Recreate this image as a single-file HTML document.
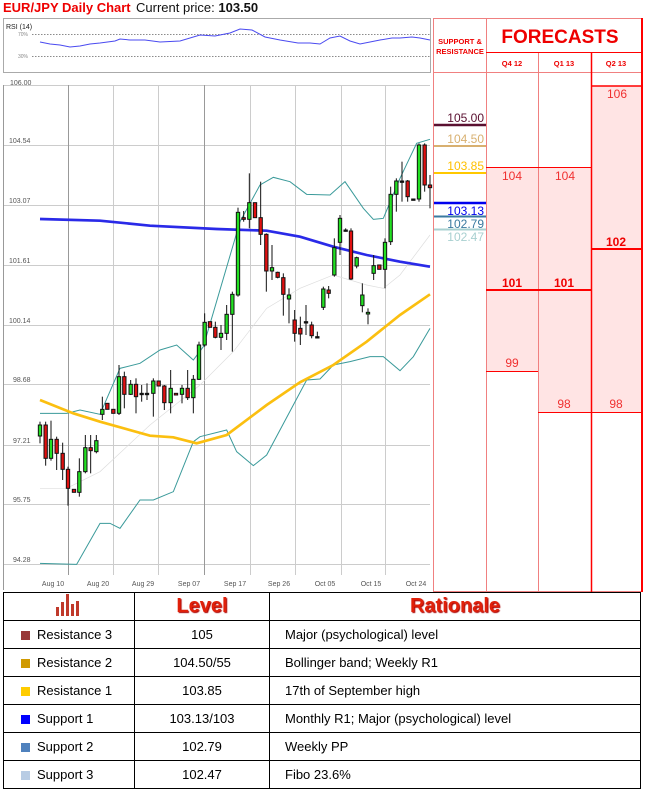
<!DOCTYPE html>
<html><head><meta charset="utf-8"><style>
body{margin:0;width:647px;height:790px;background:#fff;position:relative;overflow:hidden;font-family:"Liberation Sans",sans-serif}
.a{position:absolute}
table{border-collapse:collapse;position:absolute;left:3px;top:592px;width:638px;font-size:13px}
td{border:1px solid #000;height:27px;padding:0}
.c{text-align:center}
.sq{display:inline-block;width:9px;height:9px;margin:0 7px 0 17px;vertical-align:-1px}
.h{color:#e0200a;font-weight:bold;font-size:20px;text-align:center;text-shadow:1px 1px 1px #a00}
</style></head><body>
<div class="a" style="left:3px;top:0;font-size:13px;color:#e00;font-weight:bold">EUR/JPY Daily Chart</div>
<div class="a" style="left:136px;top:0;font-size:13px;color:#111">Current price: <b>103.50</b></div>

<svg class="a" style="left:0;top:0" width="647" height="790">
<!-- RSI box -->
<rect x="3.5" y="18.5" width="427" height="54" fill="#fff" stroke="#aaa"/>
<text x="6" y="29" font-size="7" font-family="Liberation Sans" fill="#222">RSI (14)</text>
<text x="18" y="36" font-size="5" fill="#888" font-family="Liberation Sans">70%</text>
<text x="18" y="58" font-size="5" fill="#888" font-family="Liberation Sans">30%</text>
<line x1="32" y1="34.5" x2="430" y2="34.5" stroke="#666" stroke-dasharray="1.5,1.5" stroke-width="0.8"/>
<line x1="32" y1="56.5" x2="430" y2="56.5" stroke="#666" stroke-dasharray="1.5,1.5" stroke-width="0.8"/>
<polyline fill="none" stroke="#4a4af0" stroke-width="1" points="40,42 50,44 60,45 70,47 80,46 90,44 100,43 115,41 120,39 130,40 145,40 160,42 180,41 200,35 215,36 230,33 240,29 252,30 265,37 280,40 298,43 310,43 320,44 330,38 340,36 350,41 360,44 370,42 380,40 392,38 400,38 412,37 420,38 430,40"/>
<!-- chart frame -->
<text x="10" y="85" font-size="7" fill="#555" font-family="Liberation Sans">106.00</text>
<g stroke="#ccc" stroke-width="1">
<line x1="3" y1="85.5" x2="430" y2="85.5"/><line x1="3" y1="145.5" x2="430" y2="145.5"/><line x1="3" y1="205.5" x2="430" y2="205.5"/><line x1="3" y1="265.5" x2="430" y2="265.5"/><line x1="3" y1="325.5" x2="430" y2="325.5"/><line x1="3" y1="384.5" x2="430" y2="384.5"/><line x1="3" y1="445.5" x2="430" y2="445.5"/><line x1="3" y1="504.5" x2="430" y2="504.5"/><line x1="3" y1="564.5" x2="430" y2="564.5"/>
<line x1="113.5" y1="85" x2="113.5" y2="575"/><line x1="158.5" y1="85" x2="158.5" y2="575"/><line x1="250.5" y1="85" x2="250.5" y2="575"/><line x1="295.5" y1="85" x2="295.5" y2="575"/><line x1="341.5" y1="85" x2="341.5" y2="575"/><line x1="385.5" y1="85" x2="385.5" y2="575"/>
</g>
<line x1="68.5" y1="85" x2="68.5" y2="575" stroke="#999"/><line x1="204.5" y1="85" x2="204.5" y2="575" stroke="#999"/>
<line x1="3.5" y1="85" x2="3.5" y2="590" stroke="#999"/>
<g font-size="7" fill="#555" font-family="Liberation Sans">
<text x="9" y="143">104.54</text><text x="9" y="203">103.07</text><text x="9" y="263">101.61</text><text x="9" y="323">100.14</text><text x="13" y="382">98.68</text><text x="13" y="443">97.21</text><text x="13" y="502">95.75</text><text x="13" y="562">94.28</text>
</g>
<g font-size="7" fill="#555" font-family="Liberation Sans" text-anchor="middle">
<text x="53" y="586">Aug 10</text><text x="98" y="586">Aug 20</text><text x="143" y="586">Aug 29</text><text x="189" y="586">Sep 07</text><text x="235" y="586">Sep 17</text><text x="279" y="586">Sep 26</text><text x="325" y="586">Oct 05</text><text x="371" y="586">Oct 15</text><text x="416" y="586">Oct 24</text>
</g>
<g transform="translate(0,75) scale(0.33333)" fill="none">
<polyline stroke="#ddd" stroke-width="2" points="120,1240 200,1240 300,1190 450,1050 600,930 700,830 800,700 900,640 1000,600 1100,630 1150,640 1200,600 1290,480"/>
<polyline stroke="#3a9a9a" stroke-width="3" points="120,1015 200,1015 240,1005 300,1018 360,880 420,865 480,825 530,810 580,855 610,815 720,440 780,330 820,307 870,320 920,358 990,360 1035,320 1090,400 1120,433 1150,430 1200,310 1250,205 1290,193"/>
<polyline stroke="#3a9a9a" stroke-width="3" points="120,1465 230,1468 300,1345 330,1345 360,1360 420,1275 460,1275 520,1250 580,1100 600,1085 680,1065 710,1130 760,1172 800,1140 880,990 920,915 960,912 1000,870 1050,860 1110,845 1150,845 1200,887 1240,845 1290,760"/>
<polyline stroke="#2a2ae8" stroke-width="8" points="120,432 300,437 450,452 650,462 800,467 900,485 1000,515 1100,540 1200,560 1290,575"/>
<polyline stroke="#fbbf10" stroke-width="8" points="120,975 220,1015 300,1040 450,1082 520,1087 590,1105 680,1080 800,990 900,922 1000,870 1100,800 1200,720 1290,658"/>
<g stroke="#111" stroke-width="3" id="cd"></g>
</g>
<!-- levels -->
<line x1="433" y1="125" x2="486" y2="125" stroke="#5a1030" stroke-width="2.5"/>
<line x1="433" y1="146" x2="486" y2="146" stroke="#d8b070" stroke-width="2"/>
<line x1="433" y1="173" x2="486" y2="173" stroke="#ffc800" stroke-width="2"/>
<line x1="433" y1="203" x2="486" y2="203" stroke="#0000ee" stroke-width="2.5"/>
<line x1="433" y1="216.5" x2="486" y2="216.5" stroke="#3a7aa0" stroke-width="2"/>
<line x1="433" y1="229.5" x2="486" y2="229.5" stroke="#a8d0d0" stroke-width="2"/>
<g font-size="12" font-family="Liberation Sans" text-anchor="end">
<text x="484" y="122" fill="#5a1030">105.00</text>
<text x="484" y="143" fill="#d8b070">104.50</text>
<text x="484" y="170" fill="#ffc000">103.85</text>
<text x="484" y="215" fill="#0000ee">103.13</text>
<text x="484" y="228" fill="#3a7aa0">102.79</text>
<text x="484" y="241" fill="#a8d0d0">102.47</text>
</g>
<!-- forecast table -->
<rect x="486" y="167" width="52" height="204" fill="#ffe4e4"/>
<rect x="538" y="167" width="53" height="245" fill="#ffe4e4"/>
<rect x="591" y="86" width="52" height="326" fill="#ffe4e4"/>
<g stroke="#f08080" stroke-width="1">
<rect x="433.5" y="18.5" width="209" height="573" fill="none"/>
<line x1="433" y1="72.5" x2="643" y2="72.5"/>
<line x1="486.5" y1="18" x2="486.5" y2="592"/>
<line x1="538.5" y1="52" x2="538.5" y2="592"/>
</g>
<g stroke="#f00">
<line x1="486" y1="52.5" x2="643" y2="52.5" stroke-width="1"/>
<line x1="591.5" y1="52" x2="591.5" y2="592" stroke-width="1.5"/>
<line x1="642" y1="18" x2="642" y2="592" stroke-width="2"/>
<line x1="591" y1="86" x2="643" y2="86" stroke-width="1.5"/>
<line x1="486" y1="167.5" x2="591" y2="167.5" stroke-width="1"/>
<line x1="486" y1="290" x2="591" y2="290" stroke-width="2"/>
<line x1="591" y1="249" x2="643" y2="249" stroke-width="2"/>
<line x1="486" y1="371.5" x2="538" y2="371.5" stroke-width="1"/>
<line x1="538" y1="412.5" x2="643" y2="412.5" stroke-width="1"/>
</g>
<g fill="#e00" font-family="Liberation Sans" text-anchor="middle">
<text x="560" y="43" font-size="19" font-weight="bold">FORECASTS</text>
<text x="460" y="44" font-size="7.5" font-weight="bold">SUPPORT &amp;</text>
<text x="460" y="54" font-size="7.5" font-weight="bold">RESISTANCE</text>
<text x="512" y="66" font-size="7.5" font-weight="bold">Q4 12</text>
<text x="564" y="66" font-size="7.5" font-weight="bold">Q1 13</text>
<text x="616" y="66" font-size="7.5" font-weight="bold">Q2 13</text>
<g font-size="12" fill="#f03030">
<text x="617" y="98">106</text>
<text x="512" y="180">104</text><text x="565" y="180">104</text>
<text x="512" y="367">99</text><text x="564" y="408">98</text><text x="616" y="408">98</text>
</g>
<g font-size="12" font-weight="bold" fill="#e00">
<text x="512" y="287">101</text><text x="564" y="287">101</text><text x="616" y="246">102</text>
</g>
</g>
</svg>

<table>
<tr><td style="width:130px" class="c"><svg width="30" height="22" viewBox="0 0 30 22"><g fill="#c0392b"><rect x="2" y="13" width="3" height="9"/><rect x="7" y="8" width="3" height="14"/><rect x="12" y="0" width="3" height="22"/><rect x="17" y="10" width="3" height="12"/><rect x="22" y="7" width="3" height="15"/></g></svg></td><td style="width:134px" class="h">Level</td><td class="h">Rationale</td></tr>
<tr><td><span class="sq" style="background:#983838"></span>Resistance 3</td><td class="c">105</td><td style="padding-left:15px">Major (psychological) level</td></tr>
<tr><td><span class="sq" style="background:#d09a00"></span>Resistance 2</td><td class="c">104.50/55</td><td style="padding-left:15px">Bollinger band; Weekly R1</td></tr>
<tr><td><span class="sq" style="background:#ffcc00"></span>Resistance 1</td><td class="c">103.85</td><td style="padding-left:15px">17th of September high</td></tr>
<tr><td><span class="sq" style="background:#0000ff"></span>Support 1</td><td class="c">103.13/103</td><td style="padding-left:15px">Monthly R1; Major (psychological) level</td></tr>
<tr><td><span class="sq" style="background:#4f81bd"></span>Support 2</td><td class="c">102.79</td><td style="padding-left:15px">Weekly PP</td></tr>
<tr><td><span class="sq" style="background:#b8cce4"></span>Support 3</td><td class="c">102.47</td><td style="padding-left:15px">Fibo 23.6%</td></tr>
</table>
<script>
var d=[[120,'g',1050,1083,1040,1105],[137,'r',1050,1150,1040,1172],[153,'g',1093,1150,1037,1157],[170,'r',1093,1135,1085,1185],[188,'r',1135,1183,1103,1215],[204,'r',1183,1240,1175,1292],[222,'r',1243,1252,1243,1252],[238,'g',1190,1252,1150,1265],[256,'g',1118,1190,1080,1195],[272,'r',1118,1127,1080,1195],[289,'g',1097,1130,1080,1135],[307,'g',1003,1018,965,1035],[322,'r',985,1003,985,1003],[340,'r',1003,1015,1003,1015],[357,'g',905,1015,870,1020],[373,'r',905,958,890,1000],[392,'g',928,958,915,960],[408,'r',928,965,910,1015],[425,'d',955,956,930,980],[441,'d',955,956,925,975],[460,'g',918,955,910,1025],[476,'r',918,933,918,933],[493,'r',933,983,930,1005],[512,'g',940,983,885,1015],[528,'r',955,960,955,960],[546,'g',940,958,930,985],[563,'r',940,968,885,975],[580,'g',913,968,900,1015],[597,'g',810,913,800,915],[614,'g',742,810,715,815],[630,'r',740,757,740,757],[646,'r',757,787,740,790],[663,'g',775,787,750,825],[680,'g',718,775,690,795],[697,'g',658,718,650,830],[714,'g',412,660,398,665],[731,'r',428,433,408,440],[748,'g',383,433,295,460],[765,'r',383,428,383,428],[782,'r',428,478,320,510],[799,'r',478,588,475,650],[816,'g',578,588,510,615],[833,'r',592,607,590,610],[850,'r',608,658,595,722],[867,'g',660,672,640,745],[884,'r',735,775,705,800],[901,'r',760,777,725,810],[918,'d',740,741,690,780],[935,'r',750,782,740,790],[952,'d',785,786,770,790],[970,'g',642,697,635,705],[986,'r',645,655,633,670],[1003,'g',518,600,490,605],[1020,'g',430,502,420,540],[1037,'d',465,466,460,470],[1053,'r',468,612,460,615],[1070,'g',548,573,545,580],[1087,'g',660,692,625,712],[1104,'g',712,717,700,748],[1121,'g',572,595,540,615],[1138,'r',570,583,570,583],[1155,'g',502,583,490,640],[1172,'g',358,500,335,510],[1189,'g',318,358,310,410],[1206,'d',318,319,260,380],[1223,'r',318,365,315,380],[1240,'d',372,373,372,373],[1257,'g',210,372,205,380],[1274,'r',210,330,205,350],[1290,'r',330,338,300,400]];
var g=document.getElementById('cd'),s='';
d.forEach(function(c){var f=c[1]=='g'?'#22e022':c[1]=='r'?'#e01010':'#111';
s+='<line x1="'+c[0]+'" y1="'+c[4]+'" x2="'+c[0]+'" y2="'+c[5]+'"/>';
var h=Math.max(c[3]-c[2],4);s+='<rect x="'+(c[0]-5)+'" y="'+c[2]+'" width="10" height="'+h+'" fill="'+f+'"/>';});
g.innerHTML=s;
</script>
</body></html>
